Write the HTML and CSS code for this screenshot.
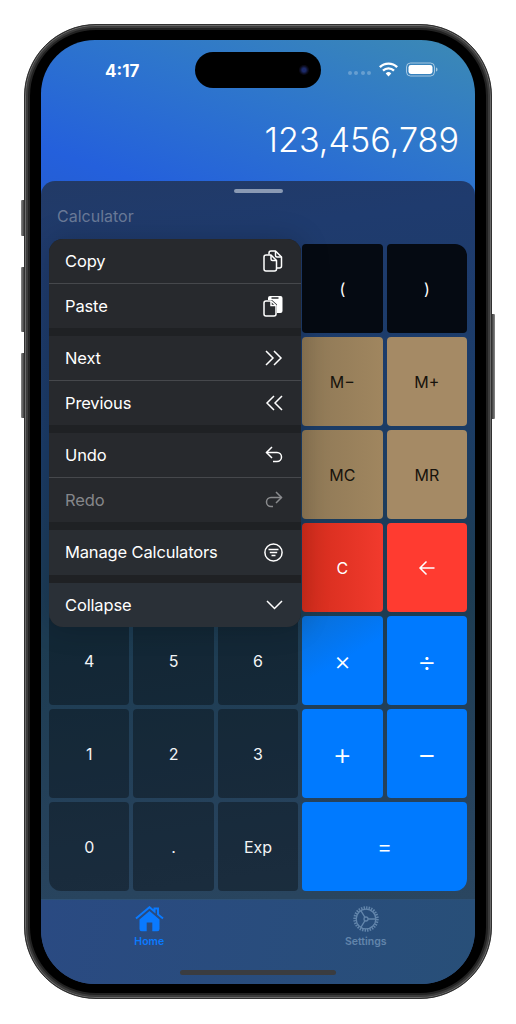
FILE: index.html
```html
<!DOCTYPE html>
<html lang="en">
<head>
<meta charset="utf-8">
<title>Calculator</title>
<link rel="stylesheet" href="styles.css">
</head>
<body>
<div class="phone">
  <span class="side-btn side-a"></span>
  <span class="side-btn side-b"></span>
  <span class="side-btn side-c"></span>
  <span class="side-btn side-d"></span>
  <div class="screen">
    <div class="island"><span class="cam"></span></div>
    <div class="status">
      <span class="time">4:17</span>
      <div class="status-right">
        <span class="dots"><i></i><i></i><i></i><i></i></span>
        <svg class="wifi" width="19" height="15" viewBox="0 0 19 15"><path d="M9.500 14.400 6.700 11.400a4 4 0 0 1 5.600 0zM4.800 9.400 3.200 7.700a9 9 0 0 1 12.600 0l-1.600 1.700a6.700 6.700 0 0 0-9.400 0zM1.700 6.100 0 4.300a13.500 13.500 0 0 1 19 0l-1.700 1.800a11 11 0 0 0-15.600 0z" fill="#fff"/></svg>
        <svg class="battery" width="32" height="15" viewBox="0 0 32 15"><rect x=".5" y="1" width="28" height="13" rx="4" fill="none" stroke="#fff" stroke-opacity=".55"/><rect x="2.500" y="3" width="24" height="9" rx="2.400" fill="#fff"/><path d="M30 5.500c1 .3 1.500 1 1.500 2s-.5 1.700-1.500 2z" fill="#fff" fill-opacity=".55"/></svg>
      </div>
    </div>
    <div class="display">123,456,789</div>
    <div class="sheet">
      <div class="handle"></div>
      <div class="title">Calculator</div>
      <div class="keypad-wrap">
        <div class="keypad">
          <div class="key"></div><div class="key"></div><div class="key"></div>
          <div class="key paren">(</div><div class="key paren">)</div>
          <div class="key"></div><div class="key"></div><div class="key"></div>
          <div class="key tan tan-l">M−</div><div class="key tan">M+</div>
          <div class="key"></div><div class="key"></div><div class="key"></div>
          <div class="key tan tan-l">MC</div><div class="key tan">MR</div>
          <div class="key"></div><div class="key"></div><div class="key"></div>
          <div class="key red red-l">C</div><div class="key red">
            <svg width="18" height="16" viewBox="0 0 18 16"><path d="M16.500 8H2M8.500 1.500 2 8l6.500 6.500" fill="none" stroke="#fff" stroke-width="1.500"/></svg>
          </div>
          <div class="key">4</div><div class="key">5</div><div class="key">6</div>
          <div class="key blue blue-l op-s">×</div><div class="key blue">÷</div>
          <div class="key">1</div><div class="key">2</div><div class="key">3</div>
          <div class="key blue">+</div><div class="key blue">−</div>
          <div class="key">0</div><div class="key">.</div><div class="key">Exp</div>
          <div class="key blue wide">=</div>
        </div>
        <div class="menu">
          <div class="item line"><span>Copy</span>
            <svg width="20" height="22" viewBox="0 0 20 22" fill="none" stroke="#fff" stroke-width="1.500" stroke-linejoin="round"><path d="M6 4.500V3a2 2 0 0 1 2-2h4.500L18.500 7v9a2 2 0 0 1-2 2H14"/><path d="M12.500 1v4.500a1.500 1.500 0 0 0 1.500 1.500h4.500"/><path d="M3 5h5l5.500 5.500V19a2 2 0 0 1-2 2H3a2 2 0 0 1-2-2V7a2 2 0 0 1 2-2z"/><path d="M8 5v4a1.500 1.500 0 0 0 1.500 1.500h4"/></svg>
          </div>
          <div class="item"><span>Paste</span>
            <svg width="20" height="22" viewBox="0 0 20 22"><path d="M7 1h10.500a2 2 0 0 1 2 2v13a2 2 0 0 1-2 2H14V9.500L9 5H5V3a2 2 0 0 1 2-2z" fill="#fff"/><path d="M8.500 3h7" stroke="#27292d" stroke-width="1.500"/><path d="M3 6h5l5 4.500V19a2 2 0 0 1-2 2H3a2 2 0 0 1-2-2V8a2 2 0 0 1 2-2z" fill="#27292d" stroke="#fff" stroke-width="1.500"/><path d="M8 6v4.500h5" fill="none" stroke="#fff" stroke-width="1.500"/></svg>
          </div>
          <div class="gap"></div>
          <div class="item line"><span>Next</span>
            <svg width="18" height="16" viewBox="0 0 18 16" fill="none" stroke="#fff" stroke-width="1.500"><path d="M1 1l7 7-7 7M9 1l7 7-7 7"/></svg>
          </div>
          <div class="item"><span>Previous</span>
            <svg width="18" height="16" viewBox="0 0 18 16" fill="none" stroke="#fff" stroke-width="1.500"><path d="M9 1 2 8l7 7M17 1l-7 7 7 7"/></svg>
          </div>
          <div class="gap"></div>
          <div class="item line"><span>Undo</span>
            <svg width="18" height="17" viewBox="0 0 18 17" fill="none" stroke="#fff" stroke-width="1.500"><path d="M7 1 1.500 6.500 7 12"/><path d="M1.500 6.500H12a4.500 4.500 0 0 1 0 9H8"/></svg>
          </div>
          <div class="item off"><span>Redo</span>
            <svg width="18" height="17" viewBox="0 0 18 17" fill="none" stroke="#8a8b8e" stroke-width="1.500"><path d="M11 1l5.500 5.500L11 12"/><path d="M16.500 6.500H6a4.500 4.500 0 0 0 0 9h2"/></svg>
          </div>
          <div class="gap"></div>
          <div class="item manage"><span>Manage Calculators</span>
            <svg width="19" height="19" viewBox="0 0 19 19" fill="none" stroke="#fff" stroke-width="1.500"><circle cx="9.500" cy="9.500" r="8.600"/><path d="M4.500 6.500h10M5.800 9.500h7.400M7.500 12.500h4"/></svg>
          </div>
          <div class="gap"></div>
          <div class="item last"><span>Collapse</span>
            <svg width="17" height="10" viewBox="0 0 17 10" fill="none" stroke="#fff" stroke-width="1.500"><path d="M1 1l7.500 7.500L16 1"/></svg>
          </div>
        </div>
      </div>
    </div>
    <div class="tabs">
      <div class="tab tab-on">
        <svg width="29" height="26" viewBox="0 0 29 26"><path d="M1 12.500 14.500 1.200 19.500 5.400V2.500h3.500v5.900L28 12.500" fill="none" stroke="#0a7aff" stroke-width="2"/><path d="M4.500 13.500 14.500 5l10 8.500V23a2.200 2.200 0 0 1-2.200 2.200H6.700A2.200 2.200 0 0 1 4.500 23zM11.700 16.500v8.700h5.600v-8.700z" fill="#0a7aff" fill-rule="evenodd"/></svg>
        <span>Home</span>
      </div>
      <div class="tab">
        <svg width="26" height="26" viewBox="0 0 26 26" fill="none" stroke="#6285ab"><circle cx="13" cy="13" r="11.200" stroke-width="3" stroke-dasharray="1.400 1.100"/><circle cx="13" cy="13" r="9.800" stroke-width="1.300"/><circle cx="13" cy="13" r="2" stroke-width="1.300"/><path d="M15 13h8M12 11.300 8 4.800M12 14.700l-4 6.500" stroke-width="1.300"/></svg>
        <span>Settings</span>
      </div>
    </div>
    <div class="home-bar"></div>
  </div>
</div>
</body>
</html>
```
FILE: styles.css
```css
* { box-sizing: border-box; }
html, body { margin: 0; background: #fff; }
body {
  padding: 24px 24px 0;
  font-family: Inter, "Liberation Sans", sans-serif;
  height: 1024px;
  overflow: hidden;
}
.phone {
  position: relative;
  width: 468px;
  height: 975px;
  padding: 15px 16px 14px;
  border-radius: 72px;
  background: #000;
  border: 1px solid #303030;
  box-shadow: inset 0 0 0 1px #6a6a6a, inset 0 0 0 3px #3b3b3b, inset 0 0 0 5px #222;
}
.side-btn {
  position: absolute;
  width: 3px;
  background: linear-gradient(90deg, #8a8a8a, #3c3c3c);
  border-radius: 1px 0 0 1px;
}
.side-a { left: -4px; top: 175px; height: 36px; }
.side-b { left: -4px; top: 242px; height: 65px; }
.side-c { left: -4px; top: 328px; height: 65px; }
.side-d { right: -4px; top: 289px; height: 105px; border-radius: 0 1px 1px 0; background: linear-gradient(90deg, #3c3c3c, #8a8a8a); }
.screen {
  position: relative;
  height: 100%;
  border-radius: 54px;
  overflow: hidden;
  display: flex;
  flex-direction: column;
  background: linear-gradient(200deg, #3c8ab4 0%, #2e76cc 12%, #2460dc 24%, #234a8a 70%, #2a4a80 100%);
}
.island {
  position: absolute;
  top: 12px;
  left: 154px;
  width: 126px;
  height: 36px;
  border-radius: 18px;
  background: #000;
}
.cam {
  position: absolute;
  right: 12px;
  top: 13px;
  width: 10px;
  height: 10px;
  border-radius: 50%;
  background: radial-gradient(circle, #1c2a6a 0 25%, #0a0a18 60%);
}
.status {
  height: 64px;
  padding: 20px 37px 0 64px;
  display: flex;
  justify-content: space-between;
  align-items: flex-start;
  color: #fff;
}
.time { font-size: 17px; font-weight: 700; line-height: 22px; }
.status-right { display: flex; align-items: center; gap: 8px; padding-top: 2px; }
.dots { display: flex; gap: 2.500px; margin-top: 7px; }
.dots i { width: 4px; height: 4px; border-radius: 50%; background: #ffffff40; }
.display {
  height: 77px;
  padding: 14px 16px 0 0;
  text-align: right;
  color: #fff;
  font-size: 34.200px;
  font-weight: 300;
  line-height: 44px;
}
.sheet {
  flex: 1;
  display: flex;
  flex-direction: column;
  border-radius: 14px 14px 0 0;
  padding: 8px 8px 0;
  background: linear-gradient(172deg, #223a66 0%, #1f3b6e 10%, #1b3c68 35%, #1d3c52 60%, #26425c 86%, #2a4660 100%);
}
.handle {
  align-self: center;
  width: 49px;
  height: 4px;
  border-radius: 2px;
  background: #8a9ab4;
}
.title {
  margin: 12px 0 0 8px;
  height: 22px;
  color: #6a7a98;
  font-size: 16px;
  line-height: 22px;
}
.keypad-wrap { position: relative; margin-top: 17px; }
.keypad {
  display: grid;
  grid-template-columns: repeat(5, 1fr);
  grid-auto-rows: 89px;
  gap: 4px;
  border-radius: 12px;
  overflow: hidden;
  height: 647px;
}
.key {
  display: flex;
  align-items: center;
  justify-content: center;
  border-radius: 4px;
  color: #f2f4f6;
  font-size: 16px;
  background: #00000059;
}
.paren { background: #050a12; color: #fff; }
.tan { background: #a58a65; color: #17130c; }
.tan-l { background: linear-gradient(90deg, #8e7856, #a0865f); }
.red { background: #ff3b30; color: #fff; }
.red-l { background: linear-gradient(90deg, #d22c1c, #f23a2d); }
.blue { background: #007aff; color: #fff; font-size: 30px; font-weight: 300; }
.blue-l { background: linear-gradient(150deg, #0a6fd6, #007aff 50%); }
.op-s { font-size: 26px; }
.wide { grid-column: span 2; font-size: 24px; }
.menu {
  position: absolute;
  left: 0;
  top: -5px;
  width: 252px;
  border-radius: 14px;
  overflow: hidden;
  background: #1f2124;
  color: #fff;
  font-size: 16.500px;
  letter-spacing: -.15px;
  box-shadow: 0 0 30px #0003;
}
.item {
  height: 44.500px;
  padding: 0 18px 0 16px;
  display: flex;
  align-items: center;
  justify-content: space-between;
  background: #27292d;
}
.item svg { flex: none; }
.line { border-bottom: 1px solid #46484c; }
.off { color: #85868a; }
.gap { height: 8px; }
.manage { background: #292d32; }
.last { background: #2a3037; }
.tabs {
  height: 85px;
  flex: none;
  display: grid;
  grid-template-columns: 1fr 1fr;
  padding: 6px 1px 0 0;
  border-top: 1px solid #2d5074;
  background: linear-gradient(100deg, #2a4a82, #284f78);
}
.tab {
  display: flex;
  flex-direction: column;
  align-items: center;
  gap: 3px;
  color: #6285ab;
  font-size: 10.500px;
  font-weight: 600;
  line-height: 14px;
}
.tab-on { color: #0a7aff; }
.home-bar {
  position: absolute;
  left: 139px;
  bottom: 9px;
  width: 156px;
  height: 5px;
  border-radius: 3px;
  background: #3a3c40;
}
```
